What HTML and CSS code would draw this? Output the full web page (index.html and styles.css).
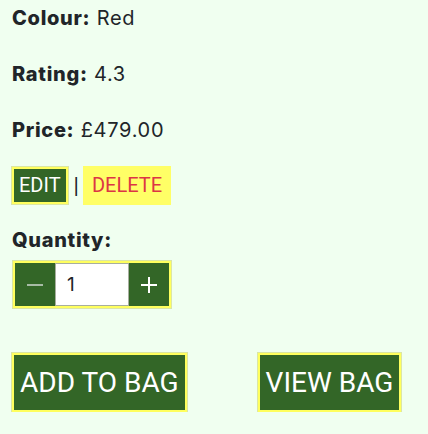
FILE: index.html
```html
<!DOCTYPE html>
<html lang="en">
<head>
<meta charset="utf-8">
<title>Product</title>
<link rel="stylesheet" href="styles.css">
</head>
<body>
<main class="product">
  <p class="detail"><strong>Colour:</strong> Red</p>
  <p class="detail"><strong>Rating:</strong> 4.3</p>
  <p class="detail"><strong>Price:</strong> £479.00</p>
  <div class="actions">
    <a class="btn btn-green" href="#">EDIT</a>
    <span class="sep">|</span>
    <a class="btn btn-yellow" href="#">DELETE</a>
  </div>
  <p class="detail qty-label"><strong>Quantity:</strong></p>
  <div class="qty">
    <button class="qty-btn qty-minus" type="button" aria-label="Decrease"><svg class="qty-icon" viewBox="0 0 16 16" width="16" height="16"><path d="M0 8H16" /></svg></button>
    <input class="qty-input" type="text" value="1">
    <button class="qty-btn" type="button" aria-label="Increase"><svg class="qty-icon" viewBox="0 0 16 16" width="16" height="16"><path d="M0 8H16M8 0V16" /></svg></button>
  </div>
  <div class="bag-row">
    <a class="btn btn-green btn-large" href="#">ADD TO BAG</a>
    <a class="btn btn-green btn-large" href="#">VIEW BAG</a>
  </div>
</main>
</body>
</html>
```
FILE: styles.css
```css
html, body {
  margin: 0;
  padding: 0;
  background: #f0fff0;
}
body {
  font-family: Inter, "Noto Sans", sans-serif;
  color: #212529;
}
.product {
  padding: 3px 12px 0 12px;
  display: flex;
  flex-direction: column;
  align-items: flex-start;
}
.detail {
  margin: 0 0 26px 0;
  font-size: 20px;
  line-height: 30px;
  letter-spacing: 0.7px;
}
.detail strong {
  font-weight: 800;
}
.actions {
  margin-top: -5px;
  display: flex;
  align-items: center;
}
.sep {
  font-family: Roboto, sans-serif;
  font-size: 22px;
  line-height: 39px;
  margin: 0 5px 0 6px;
  color: #212529;
}
.btn {
  font-family: Roboto, "Liberation Sans", sans-serif;
  text-decoration: none;
  display: inline-block;
  font-size: 20px;
  line-height: 23px;
  padding: 5px 5px;
  border: 2px solid #ffff5e;
  outline: 1px solid #dbe6a5;
}
.btn-green {
  background: #336627;
  color: #ffffff;
}
.btn-yellow {
  background: #ffff66;
  border-color: #ffff66;
  outline-color: #ffff66;
  color: #dc3545;
  padding: 5px 6px 5px 6px;
}
.qty-label {
  margin: 20px 0 6px 0;
}
.qty {
  display: flex;
  border: 2px solid #ffff5e;
  outline: 1px solid #dbe6a5;
  margin-left: 1px;
  background: #336627;
}
.qty-btn {
  width: 40px;
  height: 43px;
  border: 0;
  padding: 0;
  background: #336627;
  color: #ffffff;
  display: flex;
  align-items: center;
  justify-content: center;
}
.qty-icon {
  fill: none;
  stroke: currentColor;
  stroke-width: 2;
}
.qty-minus {
  color: #a7bba5;
}
.qty-input {
  box-sizing: border-box;
  width: 74px;
  height: 43px;
  border: 1px solid #a7ae9e;
  padding: 0 0 0 11px;
  margin: 0;
  background: #ffffff;
  font-family: Inter, sans-serif;
  font-size: 19px;
  color: #212529;
}
.bag-row {
  margin-top: 45px;
  display: flex;
  gap: 71px;
}
.btn-large {
  font-size: 28px;
  line-height: 33px;
  padding: 11px 6px 11px 6px;
}
```
